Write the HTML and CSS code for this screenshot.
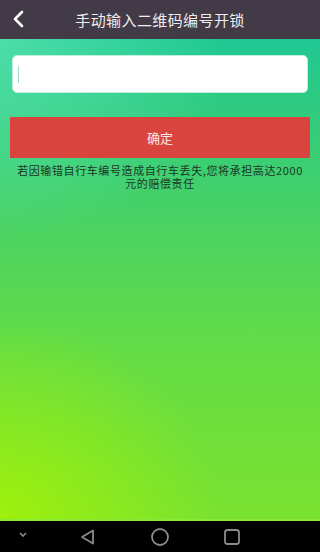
FILE: index.html
```html
<!DOCTYPE html>
<html lang="zh">
<head>
<meta charset="utf-8">
<link rel="stylesheet" href="styles.css">
</head>
<body>
<div class="app">
  <header class="topbar">
    <svg class="back" width="14" height="18" viewBox="0 0 14 18"><path d="M10 2 L3 9 L10 16" fill="none" stroke="#fff" stroke-width="2.6" stroke-linecap="round" stroke-linejoin="round"/></svg>
    <div class="title">手动输入二维码编号开锁</div>
  </header>
  <main class="content">
    <div class="input"><span class="caret"></span></div>
    <div class="btn">确定</div>
    <p class="note">若因输错自行车编号造成自行车丢失,您将承担高达2000元的赔偿责任</p>
  </main>
  <nav class="navbar">
    <svg width="12" height="8" viewBox="0 0 12 8" class="nv-down"><path d="M3 2 L6 5 L9 2" fill="none" stroke="#8a8a8a" stroke-width="1.6"/></svg>
    <svg width="18" height="18" viewBox="0 0 18 18" class="nv-back"><path d="M14 2.5 L14 15.5 L3 9 Z" fill="none" stroke="#8a8a8a" stroke-width="1.8" stroke-linejoin="round"/></svg>
    <svg width="20" height="20" viewBox="0 0 20 20" class="nv-home"><circle cx="10" cy="10" r="8" fill="none" stroke="#8a8a8a" stroke-width="1.8"/></svg>
    <svg width="18" height="18" viewBox="0 0 18 18" class="nv-recent"><rect x="2" y="2" width="14" height="14" rx="2.5" fill="none" stroke="#8a8a8a" stroke-width="1.8"/></svg>
  </nav>
</div>
</body>
</html>
```
FILE: styles.css
```css
* { box-sizing: border-box; }
html, body { margin: 0; padding: 0; }
body { width: 320px; height: 552px; overflow: hidden; font-family: "Noto Sans CJK SC", "Noto Sans", sans-serif; }
.app { display: flex; flex-direction: column; height: 552px; }
.topbar {
  height: 39px; flex: none; background: #423a46; display: flex; align-items: center; position: relative;
}
.back { position: absolute; left: 12px; top: 10px; }
.title { flex: 1; text-align: center; color: #efedf0; font-size: 15px; letter-spacing: 0.4px; line-height: 39px; }
.content {
  flex: 1;
  background:
    radial-gradient(ellipse 230px 200px at 0% 0%, rgba(110,240,190,0.55), rgba(110,240,190,0) 100%),
    radial-gradient(ellipse 220px 200px at 0% 100%, rgba(170,245,0,0.75), rgba(170,245,0,0) 100%),
    linear-gradient(180deg, #1fc792 0%, #46d167 35%, #64dc45 65%, #7ae22f 100%);
  padding: 16px 12px 0 10px;
  display: flex; flex-direction: column;
  border-bottom: 2px solid #8ae83a;
}
.input {
  height: 38px; margin: 0 0 0 2px; background: #fff; border-radius: 5px;
  border: 1.5px solid #bfeede; display: flex; align-items: center; padding-left: 5px;
}
.caret { width: 1px; height: 17px; background: #9fd8d0; }
.btn {
  margin-top: 24px; height: 41px; background: #d9453e; color: #fbe9e8;
  font-size: 13px; display: flex; align-items: center; justify-content: center; width: 300px;
}
.note {
  margin: 6px 0 0 0; font-size: 11px; line-height: 12.5px; color: #1c3626; text-align: center;
  letter-spacing: 0.6px; padding: 0 2px 0 4px;
}
.navbar {
  height: 31px; flex: none; background: #000; position: relative;
}
.navbar svg { position: absolute; }
.nv-down { left: 17px; top: 10px; }
.nv-back { left: 79px; top: 7px; }
.nv-home { left: 150px; top: 6px; }
.nv-recent { left: 223px; top: 7px; }
```
